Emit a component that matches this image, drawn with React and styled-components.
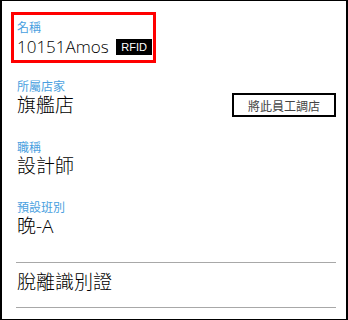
import React from 'react';
import styled, { createGlobalStyle } from 'styled-components';

const Global = createGlobalStyle`
  html, body {
    margin: 0;
    padding: 0;
    background: #fff;
  }
  body {
    font-family: "Noto Sans CJK TC", "Noto Sans", sans-serif;
  }
`

function Field({ label, value, children }) {
  return (
    <FieldBlock>
      <Label>{label}</Label>
      <ValueRow tall={children ? 1 : 0}>
        <Value>{value}</Value>
        {children}
      </ValueRow>
    </FieldBlock>
  )
}

export default function App() {
  return (
    <>
      <Global />
      <Frame>
        <NameBox>
          <Label>名稱</Label>
          <NameRow>
            <NameValue>10151Amos</NameValue>
            <Badge>RFID</Badge>
          </NameRow>
        </NameBox>

        <Field label="所屬店家" value="旗艦店">
          <MoveButton>將此員工調店</MoveButton>
        </Field>

        <Field label="職稱" value="設計師" />

        <Field label="預設班別" value="晚-A" />

        <Divider />
        <Action>脫離識別證</Action>
        <Divider />
      </Frame>
    </>
  )
}

const Frame = styled.div`
  width: 348px;
  height: 320px;
  box-sizing: border-box;
  border: 1px solid #000;
  border-left-width: 2px;
  border-right-width: 2px;
  padding: 11px 10px 0 9px;
  display: flex;
  flex-direction: column;
`

const NameBox = styled.div`
  width: 145px;
  height: 51px;
  box-sizing: border-box;
  border: 3px solid #ff0000;
  padding: 5px 1px 0 3px;
`

const FieldBlock = styled.div`
  padding-left: 6px;
  margin-top: 16px;
  & + & {
    margin-top: 23px;
  }
`

const Label = styled.div`
  font-size: 12px;
  line-height: 14px;
  color: #4a9fe0;
`

const ValueRow = styled.div`
  display: flex;
  align-items: center;
  justify-content: space-between;
  height: ${p => (p.tall ? '24px' : '22px')};
  margin-top: ${p => (p.tall ? '0' : '1px')};
`

const NameRow = styled.div`
  display: flex;
  align-items: center;
  justify-content: space-between;
  height: 22px;
  margin-top: 2px;
`

const Value = styled.div`
  font-family: "Open Sans", "Noto Sans CJK TC", sans-serif;
  font-size: 19px;
  line-height: 22px;
  font-weight: 300;
  color: #000;
`

const NameValue = styled(Value)`
  font-size: 17px;
`

const Badge = styled.span`
  background: #000;
  color: #fff;
  font-family: "Liberation Sans", sans-serif;
  font-size: 11px;
  line-height: 16px;
  padding: 0 5px;
`

const MoveButton = styled.button`
  width: 104px;
  height: 24px;
  box-sizing: border-box;
  border: 2px solid #000;
  background: #fff;
  font-family: "Noto Sans CJK TC", sans-serif;
  font-size: 12px;
  color: #444;
  padding: 0;
`

const Divider = styled.div`
  height: 1px;
  background: #a8a8a8;
  margin: 25px 0 0 5px;
  & ~ & {
    margin-top: 14px;
  }
`

const Action = styled.div`
  padding-left: 6px;
  margin-top: 8px;
  font-family: "Open Sans", "Noto Sans CJK TC", sans-serif;
  font-size: 19px;
  line-height: 22px;
  font-weight: 300;
  color: #000;
`
